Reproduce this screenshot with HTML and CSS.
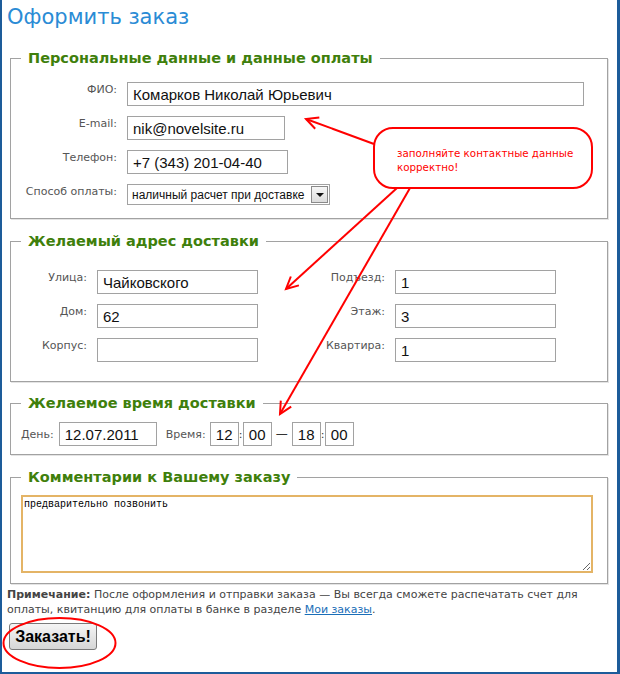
FILE: index.html
```html
<!DOCTYPE html>
<html lang="ru">
<head>
    <meta charset="UTF-8">
    <title>Оформить заказ</title>
    <link rel="stylesheet" href="styles.css">
</head>
<body>
    <div class="page">
        <h1 class="page-title">Оформить заказ</h1>

        <form class="order-form">
            <fieldset class="box box-personal">
                <legend>Персональные данные и данные оплаты</legend>
                <div class="personal-grid">
                    <label class="lbl">ФИО:</label>
                    <input class="inp inp-name" type="text" value="Комарков Николай Юрьевич">

                    <label class="lbl">E-mail:</label>
                    <input class="inp inp-email" type="text" value="nik@novelsite.ru">

                    <label class="lbl">Телефон:</label>
                    <input class="inp inp-phone" type="text" value="+7 (343) 201-04-40">

                    <label class="lbl">Способ оплаты:</label>
                    <div class="select">
                        <span class="select-text">наличный расчет при доставке</span>
                        <span class="select-btn"><span class="select-arrow"></span></span>
                    </div>
                </div>
            </fieldset>

            <fieldset class="box box-address">
                <legend>Желаемый адрес доставки</legend>
                <div class="address-grid">
                    <label class="lbl">Улица:</label>
                    <input class="inp" type="text" value="Чайковского">
                    <label class="lbl">Подъезд:</label>
                    <input class="inp" type="text" value="1">

                    <label class="lbl">Дом:</label>
                    <input class="inp" type="text" value="62">
                    <label class="lbl">Этаж:</label>
                    <input class="inp" type="text" value="3">

                    <label class="lbl">Корпус:</label>
                    <input class="inp" type="text" value="">
                    <label class="lbl">Квартира:</label>
                    <input class="inp" type="text" value="1">
                </div>
            </fieldset>

            <fieldset class="box box-time">
                <legend>Желаемое время доставки</legend>
                <div class="time-row">
                    <label class="lbl-inline">День:</label>
                    <input class="inp inp-day" type="text" value="12.07.2011">
                    <label class="lbl-inline lbl-time">Время:</label>
                    <input class="inp inp-hh" type="text" value="12">
                    <span class="colon">:</span>
                    <input class="inp inp-hh" type="text" value="00">
                    <span class="dash">—</span>
                    <input class="inp inp-hh" type="text" value="18">
                    <span class="colon">:</span>
                    <input class="inp inp-hh" type="text" value="00">
                </div>
            </fieldset>

            <fieldset class="box box-comment">
                <legend>Комментарии к Вашему заказу</legend>
                <textarea class="comment">предварительно позвонить</textarea>
            </fieldset>

            <div class="note">
                <span class="note-line"><b>Примечание:</b> После оформления и отправки заказа — Вы всегда сможете распечатать счет для</span>
                <span class="note-line">оплаты, квитанцию для оплаты в банке в разделе <a href="#">Мои заказы</a>.</span>
            </div>

            <button type="button" class="submit">Заказать!</button>
        </form>

        <!-- пометки поверх формы -->
        <div class="callout">заполняйте контактные данные<br>корректно!</div>
        <svg class="marks" width="620" height="674" viewBox="0 0 620 674">
            <defs>
                <marker id="head" markerUnits="userSpaceOnUse" markerWidth="16" markerHeight="16"
                        refX="13" refY="7" orient="auto">
                    <path d="M1,1 L13,7 L1,13" fill="none" stroke="#f00" stroke-width="2"/>
                </marker>
            </defs>
            <line x1="374" y1="144" x2="306" y2="119" stroke="#f00" stroke-width="2" marker-end="url(#head)"/>
            <line x1="397" y1="188" x2="286" y2="289" stroke="#f00" stroke-width="2" marker-end="url(#head)"/>
            <line x1="410" y1="188" x2="280" y2="414" stroke="#f00" stroke-width="2" marker-end="url(#head)"/>
            <ellipse cx="59.5" cy="643" rx="56" ry="25" fill="none" stroke="#f00" stroke-width="2"/>
        </svg>
    </div>
</body>
</html>
```

FILE: styles.css
```css
:root {
    --frame: #1d5c9a;
    --title: #2a8bd5;
    --legend: #3f7f0c;
    --label: #555555;
    --line: #a2a2a2;
}

html, body {
    margin: 0;
    padding: 0;
    background: #ffffff;
    overflow: hidden;
}

.page {
    position: relative;
    box-sizing: border-box;
    width: 620px;
    height: 674px;
    padding: 0 0 0 5px;
    border-left: 2px solid var(--frame);
    border-right: 3px solid var(--frame);
    border-bottom: 2px solid var(--frame);
    font-family: "DejaVu Sans", sans-serif;
    font-size: 11px;
    color: #444;
}

.page-title {
    margin: 0;
    padding-top: 4px;
    font-family: "DejaVu Sans", sans-serif;
    font-weight: normal;
    font-size: 21px;
    line-height: 26px;
    color: var(--title);
}

.order-form {
    margin: 0;
}

.box {
    margin: 12px 9px 0 3px;
    padding: 0 10px 10px 10px;
    border: 1px solid var(--line);
    box-shadow: 1px 1px 0 #e4e4e4;
}

.box legend {
    padding: 0 7px;
    font-weight: bold;
    font-size: 14.5px;
    line-height: 20px;
    color: var(--legend);
}

.box-personal {
    margin-top: 18px;
    padding-top: 14px;
    padding-bottom: 13px;
}

.box-address {
    padding-top: 19px;
    padding-bottom: 19px;
}

.box-time {
    margin-top: 11px;
    padding-top: 9px;
    padding-bottom: 8px;
}

.box-comment {
    padding-top: 8px;
    padding-bottom: 10px;
}

.lbl {
    text-align: right;
    padding-top: 1px;
    line-height: 14px;
    color: var(--label);
}

.inp {
    box-sizing: border-box;
    height: 24px;
    margin: 0;
    padding: 0 5px;
    border: 1px solid var(--line);
    font-family: "Liberation Sans", Arial, sans-serif;
    font-size: 15px;
    color: #111;
    background: #fff;
}

.personal-grid {
    display: grid;
    grid-template-columns: 96px auto;
    column-gap: 10px;
    row-gap: 10px;
    justify-items: start;
}

.personal-grid .lbl {
    justify-self: end;
}

.inp-name { width: 457px; }
.inp-email { width: 158px; }
.inp-phone { width: 161px; }

.select {
    box-sizing: border-box;
    width: 203px;
    height: 21px;
    display: flex;
    align-items: center;
    justify-content: space-between;
    padding: 0 1px 0 4px;
    border: 1px solid var(--line);
    font-family: "Liberation Sans", Arial, sans-serif;
    font-size: 12px;
    color: #111;
    white-space: nowrap;
    overflow: hidden;
}

.select-btn {
    box-sizing: border-box;
    flex: none;
    width: 17px;
    height: 17px;
    display: flex;
    align-items: center;
    justify-content: center;
    border: 1px solid #8a8a8a;
    background: linear-gradient(#f6f6f6, #dcdcdc);
}

.select-arrow {
    width: 0;
    height: 0;
    border-left: 4px solid transparent;
    border-right: 4px solid transparent;
    border-top: 4px solid #111;
}

.address-grid {
    display: grid;
    grid-template-columns: 66px 161px 117px 161px;
    column-gap: 10px;
    row-gap: 10px;
}

.time-row {
    display: flex;
    align-items: center;
}

.lbl-inline {
    color: var(--label);
    margin-right: 5px;
}

.lbl-time {
    margin-left: 9px;
    margin-right: 4px;
}

.inp-day { width: 98px; }

.inp-hh {
    width: 29px;
    text-align: center;
    padding: 0;
}

.colon {
    width: 4px;
    text-align: center;
    color: #333;
}

.dash {
    width: 20px;
    text-align: center;
    font-size: 12px;
    color: #333;
}

.comment {
    display: block;
    box-sizing: border-box;
    width: 572px;
    height: 78px;
    margin: 0;
    padding: 2px 1px;
    border: 2px solid #e4b466;
    font-family: "Liberation Mono", monospace;
    font-size: 10px;
    color: #000;
    resize: both;
}

.note {
    margin: 3px 0 0 0;
    line-height: 15px;
    font-size: 11px;
    color: #444;
}

.note-line {
    display: block;
}

.note a {
    color: #1a6eb8;
}

.submit {
    margin-top: 6px;
    margin-left: 2px;
    width: 88px;
    height: 27px;
    padding: 0;
    border: 1px solid #7a7a7a;
    border-radius: 3px;
    background: linear-gradient(#f5f5f5, #d6d6d6);
    font-family: "Liberation Sans", Arial, sans-serif;
    font-weight: bold;
    font-size: 16px;
    color: #000;
}

.callout {
    position: absolute;
    left: 371px;
    top: 127px;
    box-sizing: border-box;
    width: 220px;
    height: 62px;
    padding: 17px 0 0 22px;
    border: 2px solid #f00;
    border-radius: 20px;
    background: #fff;
    line-height: 14px;
    font-size: 10.3px;
    color: #f00;
}

.marks {
    position: absolute;
    left: -2px;
    top: 0;
    pointer-events: none;
}
```
